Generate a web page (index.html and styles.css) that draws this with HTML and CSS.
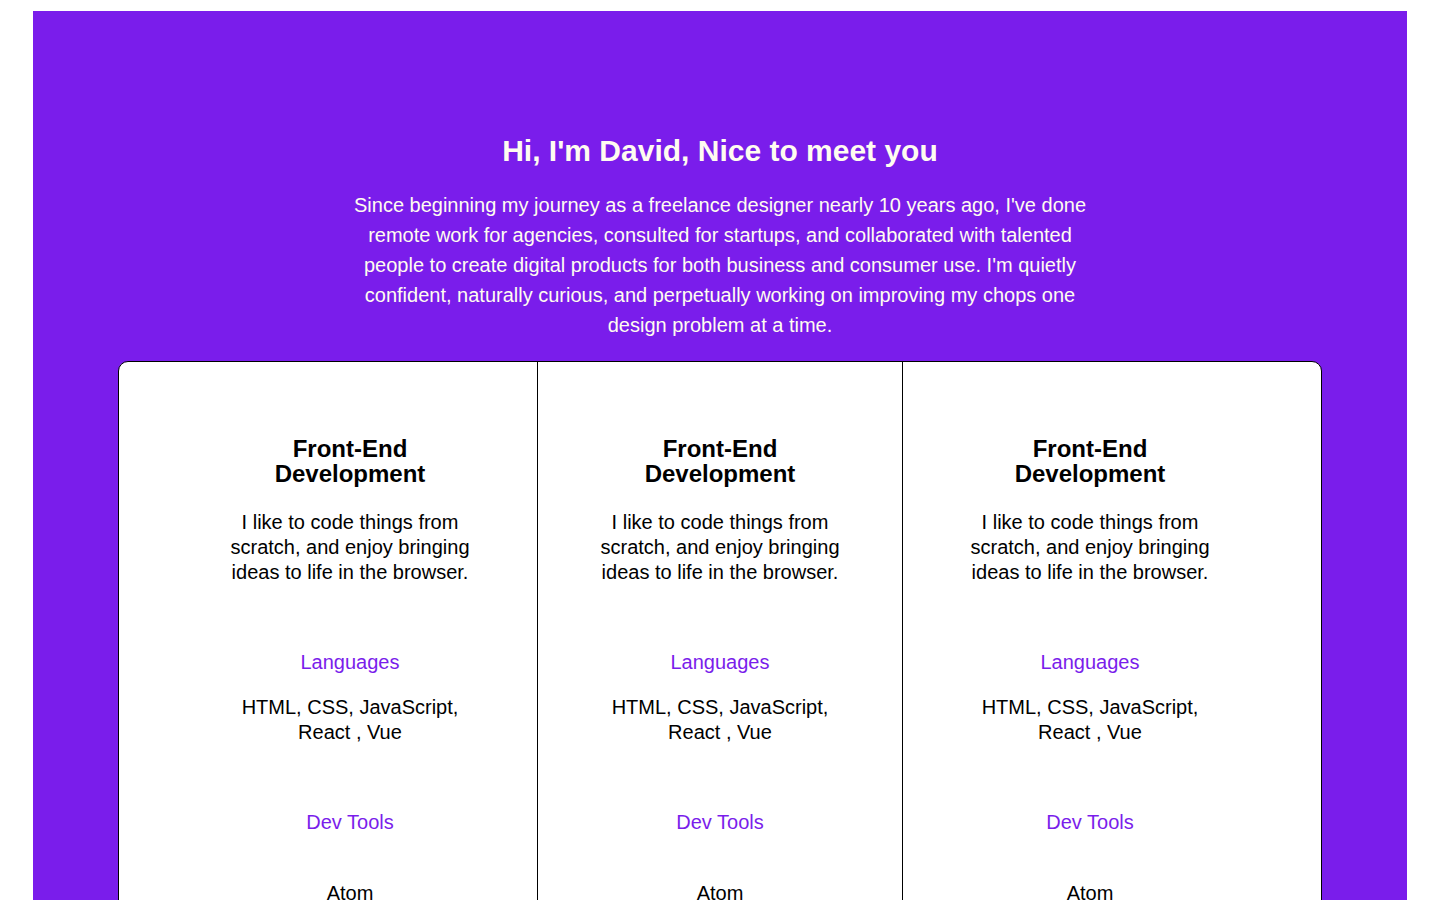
FILE: index.html
```html
<!DOCTYPE html>
<html lang="en">
<head>
<meta charset="utf-8">
<title>David</title>
<link rel="stylesheet" href="styles.css">
</head>
<body>
<section class="hero">
  <h1 class="hero-title">Hi, I'm David, Nice to meet you</h1>
  <p class="hero-text">Since beginning my journey as a freelance designer nearly 10 years ago, I've done remote work for agencies, consulted for startups, and collaborated with talented people to create digital products for both business and consumer use. I'm quietly confident, naturally curious, and perpetually working on improving my chops one design problem at a time.</p>
  <div class="skills">
    <div class="skill skill-left">
      <div class="skill-body">
        <h3 class="skill-title">Front-End Development</h3>
        <p class="skill-desc">I like to code things from scratch, and enjoy bringing ideas to life in the browser.</p>
        <p class="skill-label">Languages</p>
        <p class="skill-list">HTML, CSS, JavaScript, React , Vue</p>
        <p class="skill-label">Dev Tools</p>
        <ul class="tools">
          <li>Atom</li>
        </ul>
      </div>
    </div>
    <div class="skill skill-mid">
      <div class="skill-body">
        <h3 class="skill-title">Front-End Development</h3>
        <p class="skill-desc">I like to code things from scratch, and enjoy bringing ideas to life in the browser.</p>
        <p class="skill-label">Languages</p>
        <p class="skill-list">HTML, CSS, JavaScript, React , Vue</p>
        <p class="skill-label">Dev Tools</p>
        <ul class="tools">
          <li>Atom</li>
        </ul>
      </div>
    </div>
    <div class="skill skill-right">
      <div class="skill-body">
        <h3 class="skill-title">Front-End Development</h3>
        <p class="skill-desc">I like to code things from scratch, and enjoy bringing ideas to life in the browser.</p>
        <p class="skill-label">Languages</p>
        <p class="skill-list">HTML, CSS, JavaScript, React , Vue</p>
        <p class="skill-label">Dev Tools</p>
        <ul class="tools">
          <li>Atom</li>
        </ul>
      </div>
    </div>
  </div>
</section>
</body>
</html>
```
FILE: styles.css
```css
html, body {
  margin: 0;
  padding: 0;
  background: #ffffff;
}

body {
  font-family: "Liberation Sans", Arial, Helvetica, sans-serif;
  color: #000;
}

.hero {
  margin: 11px 33px 0;
  background: #7a1deb;
  padding: 123px 0 0;
  display: flex;
  flex-direction: column;
  align-items: center;
  min-height: 1000px;
}

.hero-title {
  margin: 0;
  font-size: 30px;
  line-height: 34px;
  font-weight: 700;
  color: #fffcf0;
  text-align: center;
}

.hero-text {
  margin: 22px 0 0;
  max-width: 750px;
  font-size: 20px;
  line-height: 30px;
  color: #fffcf0;
  text-align: center;
}

.skills {
  margin-top: 21px;
  width: 1204px;
  box-sizing: border-box;
  display: flex;
  background: #fff;
  border: 1px solid #000;
  border-radius: 10px 10px 0 0;
  overflow: hidden;
}

.skill {
  box-sizing: border-box;
  padding-top: 74px;
  display: flex;
}

.skill-left {
  width: 418px;
  padding-left: 106px;
  padding-right: 62px;
}

.skill-mid {
  width: 366px;
  border-left: 1px solid #000;
  border-right: 1px solid #000;
  padding-left: 57px;
  padding-right: 57px;
}

.skill-right {
  width: 418px;
  padding-left: 62px;
  padding-right: 106px;
}

.skill-body {
  width: 250px;
  text-align: center;
}

.skill-title {
  margin: 0;
  font-size: 24px;
  line-height: 25px;
  font-weight: 700;
}

.skill-desc {
  margin: 24px 0 0;
  font-size: 20px;
  line-height: 25px;
}

.skill-label {
  margin: 65px 0 0;
  font-size: 20px;
  line-height: 25px;
  color: #7a1deb;
}

.skill-list {
  margin: 20px 0 0;
  font-size: 20px;
  line-height: 25px;
}

.tools {
  list-style: none;
  margin: 46px 0 0;
  padding: 0;
  font-size: 20px;
  line-height: 25px;
}
```
